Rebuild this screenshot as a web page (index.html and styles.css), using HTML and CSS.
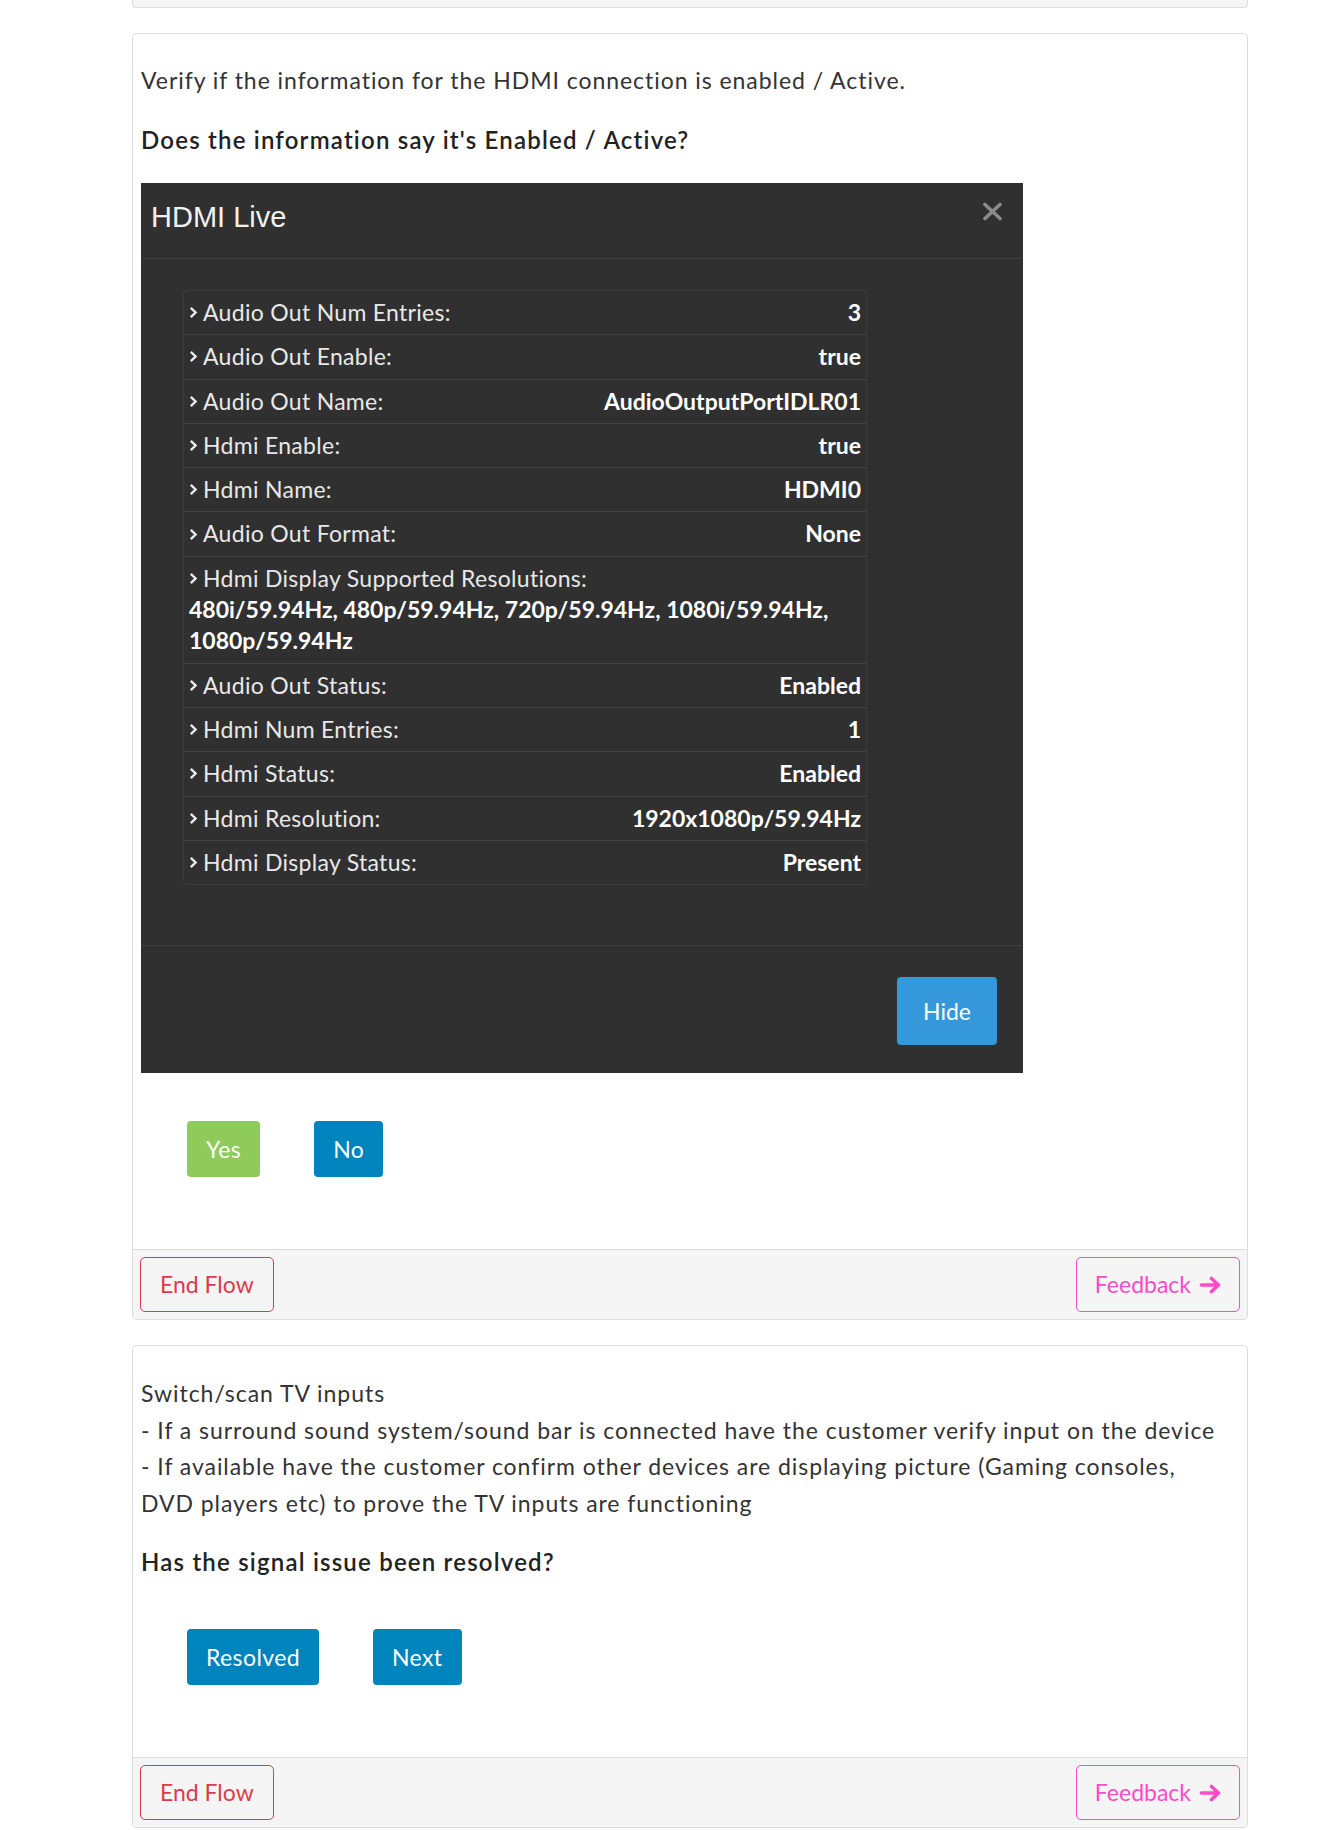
FILE: index.html
```html
<!DOCTYPE html>
<html lang="en">
<head>
<meta charset="utf-8">
<title>HDMI check</title>
<link rel="stylesheet" href="styles.css">
</head>
<body>
<div class="page">
  <div class="card-stub"></div>

  <div class="card">
    <div class="card-body">
      <p class="text">Verify if the information for the HDMI connection is enabled / Active.</p>
      <p class="question">Does the information say it's Enabled / Active?</p>

      <div class="modal">
        <div class="modal-header">
          <h2 class="modal-title">HDMI Live</h2>
          <svg class="close-icon" width="21" height="19" viewBox="0 0 21 19"><path d="M3 2.5 L18 16.5 M18 2.5 L3 16.5" stroke="#8a8a8a" stroke-width="3.6" stroke-linecap="round"/></svg>
        </div>
        <div class="modal-body">
          <div class="info-table">
            <div class="info-row"><span class="label"><svg class="chev" width="9" height="13" viewBox="0 0 9 13"><path d="M1.8 1.8 L6.6 6.5 L1.8 11.2" fill="none" stroke="#ececec" stroke-width="2.4"/></svg>Audio Out Num Entries:</span><span class="value">3</span></div>
            <div class="info-row"><span class="label"><svg class="chev" width="9" height="13" viewBox="0 0 9 13"><path d="M1.8 1.8 L6.6 6.5 L1.8 11.2" fill="none" stroke="#ececec" stroke-width="2.4"/></svg>Audio Out Enable:</span><span class="value">true</span></div>
            <div class="info-row"><span class="label"><svg class="chev" width="9" height="13" viewBox="0 0 9 13"><path d="M1.8 1.8 L6.6 6.5 L1.8 11.2" fill="none" stroke="#ececec" stroke-width="2.4"/></svg>Audio Out Name:</span><span class="value">AudioOutputPortIDLR01</span></div>
            <div class="info-row"><span class="label"><svg class="chev" width="9" height="13" viewBox="0 0 9 13"><path d="M1.8 1.8 L6.6 6.5 L1.8 11.2" fill="none" stroke="#ececec" stroke-width="2.4"/></svg>Hdmi Enable:</span><span class="value">true</span></div>
            <div class="info-row"><span class="label"><svg class="chev" width="9" height="13" viewBox="0 0 9 13"><path d="M1.8 1.8 L6.6 6.5 L1.8 11.2" fill="none" stroke="#ececec" stroke-width="2.4"/></svg>Hdmi Name:</span><span class="value">HDMI0</span></div>
            <div class="info-row"><span class="label"><svg class="chev" width="9" height="13" viewBox="0 0 9 13"><path d="M1.8 1.8 L6.6 6.5 L1.8 11.2" fill="none" stroke="#ececec" stroke-width="2.4"/></svg>Audio Out Format:</span><span class="value">None</span></div>
            <div class="info-row stacked"><span class="label"><svg class="chev" width="9" height="13" viewBox="0 0 9 13"><path d="M1.8 1.8 L6.6 6.5 L1.8 11.2" fill="none" stroke="#ececec" stroke-width="2.4"/></svg>Hdmi Display Supported Resolutions:</span><span class="value">480i/59.94Hz, 480p/59.94Hz, 720p/59.94Hz, 1080i/59.94Hz,<br>1080p/59.94Hz</span></div>
            <div class="info-row"><span class="label"><svg class="chev" width="9" height="13" viewBox="0 0 9 13"><path d="M1.8 1.8 L6.6 6.5 L1.8 11.2" fill="none" stroke="#ececec" stroke-width="2.4"/></svg>Audio Out Status:</span><span class="value">Enabled</span></div>
            <div class="info-row"><span class="label"><svg class="chev" width="9" height="13" viewBox="0 0 9 13"><path d="M1.8 1.8 L6.6 6.5 L1.8 11.2" fill="none" stroke="#ececec" stroke-width="2.4"/></svg>Hdmi Num Entries:</span><span class="value">1</span></div>
            <div class="info-row"><span class="label"><svg class="chev" width="9" height="13" viewBox="0 0 9 13"><path d="M1.8 1.8 L6.6 6.5 L1.8 11.2" fill="none" stroke="#ececec" stroke-width="2.4"/></svg>Hdmi Status:</span><span class="value">Enabled</span></div>
            <div class="info-row"><span class="label"><svg class="chev" width="9" height="13" viewBox="0 0 9 13"><path d="M1.8 1.8 L6.6 6.5 L1.8 11.2" fill="none" stroke="#ececec" stroke-width="2.4"/></svg>Hdmi Resolution:</span><span class="value">1920x1080p/59.94Hz</span></div>
            <div class="info-row"><span class="label"><svg class="chev" width="9" height="13" viewBox="0 0 9 13"><path d="M1.8 1.8 L6.6 6.5 L1.8 11.2" fill="none" stroke="#ececec" stroke-width="2.4"/></svg>Hdmi Display Status:</span><span class="value">Present</span></div>
          </div>
        </div>
        <div class="modal-footer">
          <button class="btn btn-hide">Hide</button>
        </div>
      </div>

      <div class="actions">
        <button class="btn btn-green">Yes</button>
        <button class="btn btn-blue">No</button>
      </div>
    </div>
    <div class="card-footer">
      <button class="btn-outline btn-end">End Flow</button>
      <button class="btn-outline btn-feedback">Feedback <svg class="arrow" width="23" height="18" viewBox="0 0 23 18"><path d="M2.5 9 H19.5 M12.5 2.5 L19.5 9 L12.5 15.5" fill="none" stroke="currentColor" stroke-width="3.6" stroke-linecap="round" stroke-linejoin="round"/></svg></button>
    </div>
  </div>

  <div class="card">
    <div class="card-body card-body-late">
      <p class="text">Switch/scan TV inputs<br>- If a surround sound system/sound bar is connected have the customer verify input on the device<br>- If available have the customer confirm other devices are displaying picture (Gaming consoles,<br>DVD players etc) to prove the TV inputs are functioning</p>
      <p class="question">Has the signal issue been resolved?</p>
      <div class="actions actions-late">
        <button class="btn btn-blue">Resolved</button>
        <button class="btn btn-blue">Next</button>
      </div>
    </div>
    <div class="card-footer">
      <button class="btn-outline btn-end">End Flow</button>
      <button class="btn-outline btn-feedback">Feedback <svg class="arrow" width="23" height="18" viewBox="0 0 23 18"><path d="M2.5 9 H19.5 M12.5 2.5 L19.5 9 L12.5 15.5" fill="none" stroke="currentColor" stroke-width="3.6" stroke-linecap="round" stroke-linejoin="round"/></svg></button>
    </div>
  </div>
</div>
</body>
</html>
```

FILE: styles.css
```css
body {
  margin: 0;
  background: #ffffff;
  font-family: Lato, "Open Sans", sans-serif;
  color: #333333;
}

.page {
  margin-left: 132px;
  width: 1116px;
}

.card-stub {
  height: 7px;
  background: #f5f5f5;
  border: 1px solid #dddddd;
  border-top: 0;
  border-radius: 0 0 4px 4px;
}

.card {
  margin-top: 25px;
  border: 1px solid #dddddd;
  border-radius: 4px;
  overflow: hidden;
  background: #ffffff;
}

.card-body {
  padding: 28px 8px 0;
}

.card-body-late {
  padding-top: 29px;
}

.text {
  margin: 0;
  font-size: 23px;
  line-height: 36.5px;
  letter-spacing: 0.95px;
  color: #333333;
}

.question {
  margin: 23px 0 0;
  font-size: 24px;
  line-height: 36.5px;
  letter-spacing: 1.2px;
  font-weight: 600;
  color: #222222;
}

/* dark modal */
.modal {
  margin-top: 25px;
  width: 882px;
  background: #303030;
}

.modal-header {
  display: flex;
  justify-content: space-between;
  align-items: flex-start;
  height: 76px;
  box-sizing: border-box;
  padding: 14px 20px 0 10px;
  border-bottom: 1px solid #3e3e3e;
}

.modal-title {
  margin: 0;
  font-family: "Liberation Sans", Arial, sans-serif;
  font-weight: 400;
  font-size: 29px;
  line-height: 40px;
  color: #f2f2f2;
}

.close-icon {
  margin-top: 5px;
}

.modal-body {
  padding: 31px 0 60px 42px;
}

.info-table {
  width: 684px;
  box-sizing: border-box;
  border: 1px solid #3c3c3c;
  border-radius: 4px;
}

.info-row {
  display: flex;
  justify-content: space-between;
  align-items: flex-start;
  padding: 6px 5px;
  font-size: 23px;
  line-height: 31.3px;
  border-top: 1px solid #434343;
}

.info-row:first-child {
  border-top: 0;
}

.info-row.stacked {
  display: block;
}

.info-row.stacked .value {
  display: block;
}

.label {
  display: flex;
  align-items: center;
  gap: 5px;
  color: #e8e8e8;
  letter-spacing: 0.3px;
}

.value {
  font-weight: 700;
  color: #ffffff;
}

.modal-footer {
  display: flex;
  justify-content: flex-end;
  border-top: 1px solid #3e3e3e;
  padding: 31px 26px 28px;
}

/* buttons */
.btn {
  border: 0;
  border-radius: 4px;
  font-family: Lato, "Open Sans", sans-serif;
  font-size: 23px;
  letter-spacing: 0.4px;
  color: #ffffff;
  line-height: 36px;
  padding: 10px 19px;
  cursor: pointer;
}

.btn-hide {
  background: #3498db;
  height: 68px;
  padding: 0 26px;
  letter-spacing: 0;
}

.btn-green {
  background: #8ecb5b;
}

.btn-blue {
  background: #0084be;
}

.actions {
  display: flex;
  gap: 54px;
  padding-left: 46px;
  margin-top: 48px;
  margin-bottom: 72px;
}

.actions-late {
  margin-top: 48.5px;
}

.card-footer {
  display: flex;
  justify-content: space-between;
  background: #f5f5f5;
  border-top: 1px solid #dddddd;
  padding: 7px;
}

.btn-outline {
  display: flex;
  align-items: center;
  gap: 8px;
  background: transparent;
  font-family: Lato, "Open Sans", sans-serif;
  font-size: 23px;
  line-height: 35px;
  padding: 9px 19px;
  border-radius: 5px;
  cursor: pointer;
}

.btn-end {
  color: #e0394c;
  border: 1px solid #e0394c;
}

.btn-feedback {
  color: #fb4bc7;
  border: 1px solid #fb4bc7;
  padding: 9px 17px 9px 18px;
}
```
